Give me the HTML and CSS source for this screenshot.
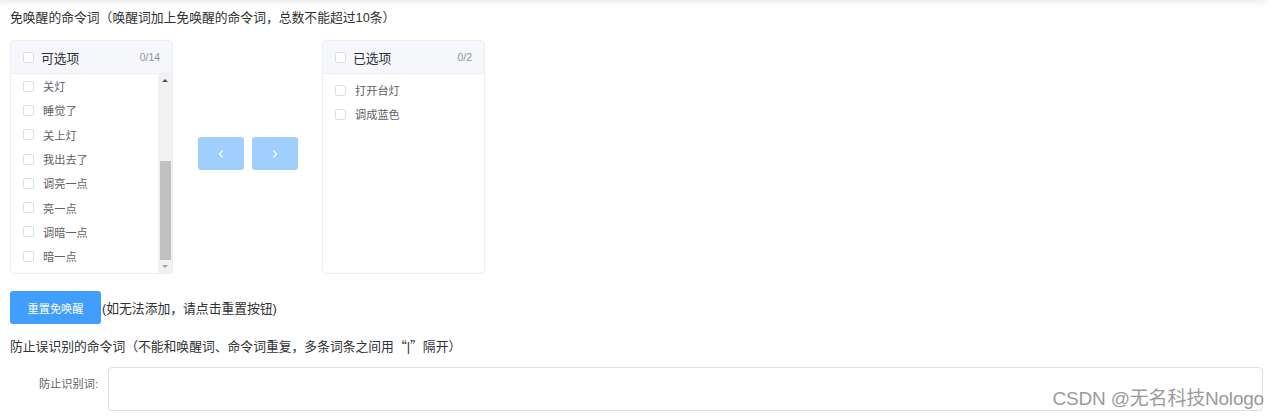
FILE: index.html
```html
<!DOCTYPE html>
<html lang="zh-CN">
<head>
<meta charset="utf-8">
<title>免唤醒命令词</title>
<link rel="stylesheet" href="styles.css">
</head>
<body>
<div class="top-shadow"></div>
<div class="page">
  <div class="section-title">免唤醒的命令词（唤醒词加上免唤醒的命令词，总数不能超过10条）</div>
  <div class="transfer">
    <div class="panel">
      <div class="panel-head">
        <span class="cb"></span>
        <span class="ph-title">可选项</span>
        <span class="ph-count">0/14</span>
      </div>
      <div class="panel-body">
        <ul class="list list-scrolled">
          <li><span class="cb"></span><span>关灯</span></li>
          <li><span class="cb"></span><span>睡觉了</span></li>
          <li><span class="cb"></span><span>关上灯</span></li>
          <li><span class="cb"></span><span>我出去了</span></li>
          <li><span class="cb"></span><span>调亮一点</span></li>
          <li><span class="cb"></span><span>亮一点</span></li>
          <li><span class="cb"></span><span>调暗一点</span></li>
          <li><span class="cb"></span><span>暗一点</span></li>
        </ul>
        <div class="sbar">
          <div class="sbar-arrow"><span class="tri-up"></span></div>
          <div class="sbar-track"><div class="sbar-thumb"></div></div>
          <div class="sbar-arrow"><span class="tri-down"></span></div>
        </div>
      </div>
    </div>
    <div class="transfer-buttons">
      <button class="btn-move" type="button" aria-label="left">
        <svg width="8" height="10" viewBox="0 0 8 10"><polyline points="5.5,1.5 2.5,5 5.5,8.5" fill="none" stroke="#fff" stroke-width="1.2"/></svg>
      </button>
      <button class="btn-move" type="button" aria-label="right">
        <svg width="8" height="10" viewBox="0 0 8 10"><polyline points="2.5,1.5 5.5,5 2.5,8.5" fill="none" stroke="#fff" stroke-width="1.2"/></svg>
      </button>
    </div>
    <div class="panel">
      <div class="panel-head">
        <span class="cb"></span>
        <span class="ph-title">已选项</span>
        <span class="ph-count">0/2</span>
      </div>
      <div class="panel-body">
        <ul class="list list-right">
          <li><span class="cb"></span><span>打开台灯</span></li>
          <li><span class="cb"></span><span>调成蓝色</span></li>
        </ul>
      </div>
    </div>
  </div>
  <div class="reset-row">
    <button class="btn-primary" type="button">重置免唤醒</button><span class="hint">(如无法添加，请点击重置按钮)</span>
  </div>
  <div class="section-title second">防止误识别的命令词（不能和唤醒词、命令词重复，多条词条之间用<span class="cjk">“</span>|<span class="cjk">”</span>隔开）</div>
  <div class="form-row">
    <label class="form-label">防止识别词:</label>
    <textarea class="textarea"></textarea>
  </div>
</div>
<div class="watermark">CSDN @无名科技Nologo</div>
</body>
</html>
```
FILE: styles.css
```css
* { box-sizing: border-box; }
html, body { margin: 0; padding: 0; background: #fff; }
body {
  width: 1280px;
  height: 417px;
  overflow: hidden;
  position: relative;
  font-family: "Liberation Sans", "Noto Sans CJK SC", sans-serif;
  color: #303133;
}
.top-shadow {
  position: absolute;
  left: -10px;
  top: -12px;
  width: 1282px;
  height: 12px;
  border-radius: 0 0 12px 12px;
  box-shadow: 0 2px 7px rgba(0,0,0,0.09);
  background: #fff;
}
.page {
  padding: 8px 0 0 10px;
}
.section-title {
  font-size: 12.8px;
  line-height: 20px;
  height: 20px;
  color: #303133;
  white-space: nowrap;
}
.cjk {
  font-family: "Noto Sans CJK SC", sans-serif;
}
.transfer {
  margin-top: 12px;
  display: flex;
  align-items: center;
}
.panel {
  width: 163px;
  height: 234px;
  border: 1px solid #ebeef5;
  border-radius: 4px;
  overflow: hidden;
  background: #fff;
  display: flex;
  flex-direction: column;
}
.panel-head {
  height: 33px;
  flex: none;
  background: #f5f7fa;
  border-bottom: 1px solid #ebeef5;
  display: flex;
  align-items: center;
  padding: 0 12px;
}
.cb {
  display: inline-block;
  width: 11px;
  height: 11px;
  border: 1px solid #dcdfe6;
  border-radius: 2px;
  background: #fff;
  flex: none;
}
.ph-title {
  margin-left: 7px;
  font-size: 12.8px;
  color: #303133;
}
.ph-count {
  margin-left: auto;
  font-size: 10.4px;
  color: #909399;
}
.panel-body {
  flex: 1;
  display: flex;
  overflow: hidden;
}
.list {
  list-style: none;
  margin: 0;
  padding: 0;
  flex: 1;
}
.list-right { padding-top: 4px; }
.list li {
  height: 24.3px;
  display: flex;
  align-items: center;
  padding-left: 12px;
  font-size: 11.2px;
  color: #606266;
}
.list li .cb { margin-right: 9px; }
.sbar {
  width: 14px;
  flex: none;
  background: #f1f1f1;
  display: flex;
  flex-direction: column;
  padding: 0 1px 0 1px;
}
.sbar-arrow {
  height: 13px;
  flex: none;
  display: flex;
  align-items: center;
  justify-content: center;
}
.tri-up, .tri-down {
  width: 0;
  height: 0;
  border-left: 3px solid transparent;
  border-right: 3px solid transparent;
}
.tri-up { border-bottom: 3px solid #505050; }
.tri-down { border-top: 3px solid #a3a3a3; }
.sbar-track {
  flex: 1;
  display: flex;
  flex-direction: column;
  justify-content: flex-end;
}
.sbar-thumb {
  height: 99px;
  background: #c1c1c1;
  margin: 0 0 0 1px;
}
.transfer-buttons {
  display: flex;
  gap: 8px;
  margin: -7px 24px 0 25px;
}
.btn-move {
  width: 46px;
  height: 33px;
  border: 0;
  border-radius: 3px;
  background: #a0cfff;
  display: flex;
  align-items: center;
  justify-content: center;
  padding: 0;
}
.btn-move svg { display: block; }
.reset-row {
  margin-top: 17px;
  display: flex;
  align-items: center;
  height: 33px;
}
.btn-primary {
  width: 91px;
  height: 33px;
  border: 0;
  border-radius: 3px;
  background: #409eff;
  color: #fff;
  font-family: "Liberation Sans", "Noto Sans CJK SC", sans-serif;
  font-size: 11.2px;
  padding: 0;
  margin-right: 1px;
}
.hint {
  font-size: 12.8px;
  color: #303133;
}
.section-title.second {
  margin-top: 12px;
}
.form-row {
  margin-top: 11px;
  display: flex;
  align-items: flex-start;
}
.form-label {
  width: 98px;
  flex: none;
  padding-right: 10px;
  text-align: right;
  font-size: 11.2px;
  line-height: 34px;
  color: #606266;
}
.textarea {
  width: 1155px;
  height: 44px;
  border: 1px solid #dcdfe6;
  border-radius: 4px;
  resize: none;
  outline: none;
  margin: 0;
}
.watermark {
  position: absolute;
  right: 16px;
  bottom: 7px;
  font-size: 19px;
  color: #9a9a9a;
  font-family: "Liberation Sans", "Noto Sans CJK SC", sans-serif;
  letter-spacing: -0.2px;
  white-space: nowrap;
}
```
